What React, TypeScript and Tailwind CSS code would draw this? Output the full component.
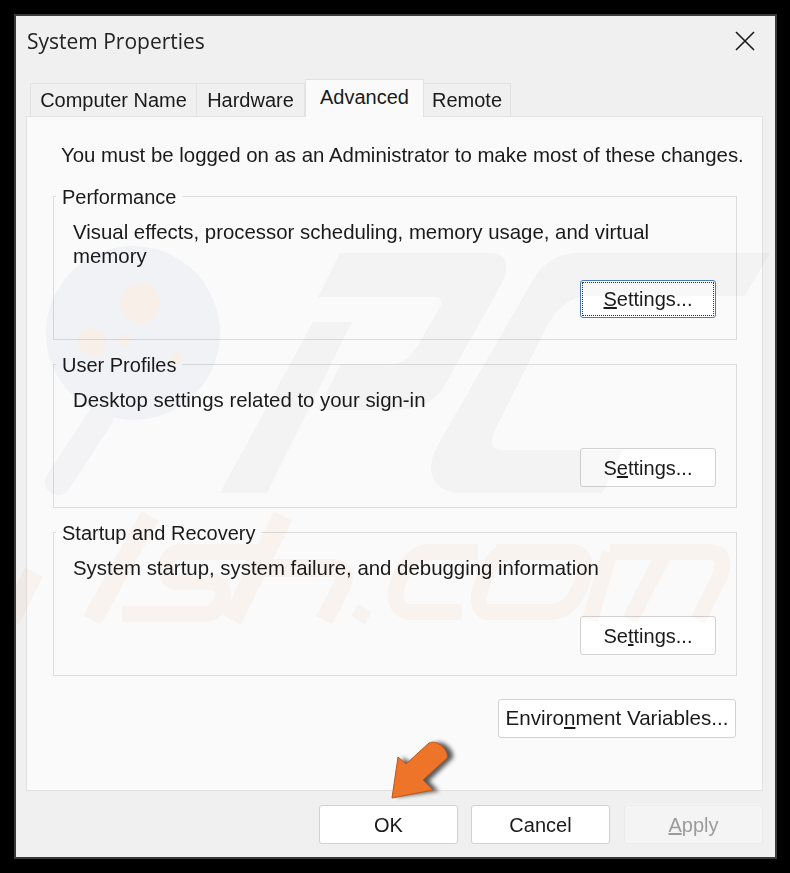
const sans = "font-['Liberation_Sans',Arial,sans-serif]"

function Btn({ children, className = "" }: { children: React.ReactNode; className?: string }) {
  return (
    <button
      type="button"
      className={`flex items-center justify-center rounded-[3px] border border-[#d2d2d2] bg-white text-[20px] text-[#1a1a1a] ${className}`}
    >
      {children}
    </button>
  )
}

function Group({ title, text, button }: { title: string; text: string; button: React.ReactNode }) {
  return (
    <div className="relative flex h-[144px] flex-col border border-[#dcdcdc] pl-[19px] pr-[20px]">
      <span className="absolute -top-[12px] left-[2px] bg-[#fafafa] px-[6px] text-[20px] leading-[24px] text-[#1a1a1a]">
        {title}
      </span>
      <p className="mt-[23px] text-[20.4px] leading-[24px] text-[#1a1a1a]">{text}</p>
      <div className="mt-auto mb-[20px] flex justify-end">{button}</div>
    </div>
  )
}

function Tab({ label, active = false, w }: { label: string; active?: boolean; w: string }) {
  return active ? (
    <div className={`relative z-10 -mb-px flex h-[38px] items-center justify-center border border-b-0 border-[#e2e2e2] bg-[#fafafa] pb-[3px] text-[20px] text-[#1a1a1a] ${w}`}>
      {label}
    </div>
  ) : (
    <div className={`flex h-[33px] items-center justify-center border-t border-r border-[#e2e2e2] bg-[#f0f0f0] text-[20px] text-[#1a1a1a] ${w}`}>
      {label}
    </div>
  )
}

// faint site logo laid over the whole dialog
function Watermark() {
  return (
    <svg className="pointer-events-none absolute left-0 top-0 h-[873px] w-[790px] mix-blend-multiply" viewBox="0 0 790 873" fill="none">
      <circle cx="133" cy="333" r="87" fill="#f6f7fb" />
      <circle cx="140" cy="303" r="20" fill="#fdf4ee" />
      <circle cx="92" cy="342" r="14" fill="#fdf4ee" />
      <circle cx="124" cy="340" r="6" fill="#fdf4ee" />
      <circle cx="177" cy="358" r="6" fill="#fdf4ee" />
      <path d="M100 418 L58 482" stroke="#f8f8fa" strokeWidth="26" strokeLinecap="round" />
      <g fill="#f8f8f9">
        <path d="M313 322 H352 L267 493 H220 Z" />
        <path d="M340 253 H490 C510 253 509 270 502 283 L445 385 C433 405 415 410 392 410 H318 L341 364 H390 C405 364 412 355 418 345 L440 307 C444 299 440 297 432 297 H318 Z" />
        <path d="M770 253 L745 296 H590 C570 296 555 310 545 330 L495 430 C488 445 492 450 505 450 H623 L602 493 H462 C435 493 425 475 435 450 L530 285 C540 265 555 253 580 253 Z" />
      </g>
      <g stroke="#fdf8f4" strokeWidth="20" fill="none">
        <path d="M34 572 L10 620" />
        <path d="M150 516 L92 620" />
        <path d="M262 552 H180 C165 552 160 578 175 582 H215 C230 586 222 614 205 614 H122" strokeWidth="16" />
        <path d="M283 516 L232 620" />
        <path d="M246 568 H330 C345 568 347 575 340 590 L324 620" strokeWidth="18" />
        <path d="M365 608 L358 620" strokeWidth="16" />
        <path d="M478 552 H430 C415 552 405 565 398 582 C392 600 398 612 412 612 H462" strokeWidth="16" />
        <path d="M496 552 H570 C585 552 588 565 582 582 C576 600 565 612 550 612 H490 C478 612 476 600 482 585 C488 565 495 552 510 552" strokeWidth="16" />
        <path d="M610 552 H710 C726 552 724 568 718 580 L698 620 M665 552 L630 620 M610 552 L590 620" strokeWidth="16" />
      </g>
    </svg>
  )
}

function Arrow() {
  return (
    <svg className="absolute left-[380px] top-[730px] h-[80px] w-[80px]" viewBox="380 730 80 80" fill="none">
      <path d="M400 757 L409 764 L432 743 C440 739 452 750 450 758 L426 781 L436 791 L394 797 Z" fill="#222" transform="translate(3 0)" opacity="0.75" style={{ filter: "blur(2px)" }} />
      <path
        d="M398 757 L406 764 L429 743 C437 739 449 750 447 758 L423 780 L433 790 L392 798 Z"
        fill="#ed7429"
        stroke="#b8591f"
        strokeWidth="1"
        strokeLinejoin="round"
      />
    </svg>
  )
}

export default function App() {
  return (
    <div className={`relative h-[873px] w-[790px] bg-black p-[14px] ${sans}`}>
      <div className="flex h-[845px] w-[763px] flex-col border-2 border-[#3a3a3a] bg-[#f0f0f0] pl-[10px] pr-[12px]">
        <div className="flex h-[50px] shrink-0 items-center justify-between">
          <span className="pl-[1px] pt-[2px] font-['Open_Sans',sans-serif] text-[21px] text-[#222]">System Properties</span>
          <svg className="mr-[8px] h-[20px] w-[20px]" viewBox="0 0 20 20" fill="none" stroke="#1a1a1a" strokeWidth="1.6">
            <path d="M1 1 L19 19 M19 1 L1 19" />
          </svg>
        </div>
        <div className="mt-[13px] flex h-[37px] shrink-0 items-end pl-[4px]">
          <Tab label="Computer Name" w="w-[167px] border-l" />
          <Tab label="Hardware" w="w-[108px]" />
          <Tab label="Advanced" active w="w-[119px]" />
          <Tab label="Remote" w="w-[87px]" />
        </div>
        <div className="flex h-[675px] shrink-0 flex-col border border-[#e2e2e2] bg-[#fafafa] pl-[26px] pr-[25px]">
          <p className="mt-[26px] ml-[8px] whitespace-nowrap text-[20.4px] leading-[24px] text-[#1a1a1a]">
            You must be logged on as an Administrator to make most of these changes.
          </p>
          <div className="mt-[29px] flex flex-col gap-[24px]">
            <Group
              title="Performance"
              text="Visual effects, processor scheduling, memory usage, and virtual memory"
              button={
                <Btn className="mb-[1px] h-[38px] w-[136px] !border-[#4a7fb5] outline-1 -outline-offset-3 outline-dotted outline-[#333]">
                  <span><u>S</u>ettings...</span>
                </Btn>
              }
            />
            <Group
              title="User Profiles"
              text="Desktop settings related to your sign-in"
              button={<Btn className="h-[39px] w-[136px]"><span>S<u>e</u>ttings...</span></Btn>}
            />
            <Group
              title="Startup and Recovery"
              text="System startup, system failure, and debugging information"
              button={<Btn className="h-[39px] w-[136px]"><span>Se<u>t</u>tings...</span></Btn>}
            />
          </div>
          <div className="mt-[23px] mr-[1px] flex justify-end">
            <Btn className="h-[39px] w-[238px] !text-[20.6px]"><span>Enviro<u>n</u>ment Variables...</span></Btn>
          </div>
        </div>
        <div className="mt-[14px] flex justify-end gap-[13px]">
          <Btn className="h-[39px] w-[139px]">OK</Btn>
          <Btn className="h-[39px] w-[139px]">Cancel</Btn>
          <div className="ml-[1px] flex h-[39px] w-[139px] items-center justify-center rounded-[3px] border border-[#ececec] bg-[#f4f4f4] text-[20px] text-[#9c9c9c]">
            <span><u>A</u>pply</span>
          </div>
        </div>
      </div>
      <Watermark />
      <Arrow />
    </div>
  )
}
